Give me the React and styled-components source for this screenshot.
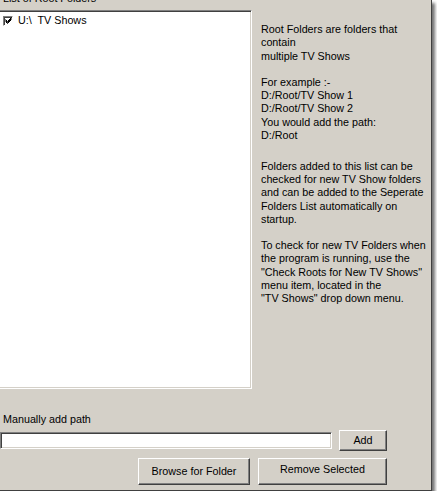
import React from "react";
import styled, { createGlobalStyle } from "styled-components";

const GlobalStyle = createGlobalStyle`
  html, body {
    margin: 0;
    padding: 0;
    background: #ffffff;
  }
  body {
    font-family: "Liberation Sans", Arial, sans-serif;
    font-size: 10.75px;
    color: #000;
  }
`;

const face = "#d4d0c8";

const Window = styled.div`
  width: 432px;
  height: 491px;
  box-sizing: border-box;
  background: ${face};
  border-right: 1px solid #404040;
  border-bottom: 1px solid #404040;
  box-shadow: 3px 3px 3px rgba(0, 0, 0, 0.55);
  overflow: hidden;
  display: flex;
  flex-direction: column;
`;

const Top = styled.div`
  display: flex;
  margin-top: -8px;
`;

const LeftCol = styled.div`
  display: flex;
  flex-direction: column;
  margin-left: -2px;
  width: 254px;
  flex-shrink: 0;
`;

const GroupLabel = styled.div`
  height: 13px;
  line-height: 13px;
  padding-left: 5px;
  margin-bottom: 5px;
  white-space: nowrap;
`;

const ListBox = styled.div`
  height: 379px;
  box-sizing: border-box;
  background: #fff;
  border-style: solid;
  border-width: 1px;
  border-color: #808080 #ffffff #ffffff #808080;
  box-shadow: inset 1px 1px 0 #404040, inset -1px -1px 0 ${face};
  padding: 3px 0 0 4px;
`;

const Item = styled.div`
  display: flex;
  align-items: center;
  gap: 5px;
  height: 13px;
  line-height: 13px;
`;

const CheckBox = styled.span`
  display: inline-flex;
  align-items: center;
  justify-content: center;
  width: 10px;
  height: 10px;
  box-sizing: border-box;
  background: #fff;
  border-style: solid;
  border-width: 1px;
  border-color: #808080 #ffffff #ffffff #808080;
  box-shadow: inset 1px 1px 0 #404040;
`;

const ItemText = styled.span`
  white-space: pre;
`;

const Info = styled.div`
  margin-left: 9px;
  padding-top: 31.2px;
  display: flex;
  flex-direction: column;
  gap: 17.9px;
`;

const InfoBlock = styled.div`
  white-space: pre-line;
  line-height: 13.2px;
`;

const Bottom = styled.div`
  display: flex;
  flex-direction: column;
  width: 387px;
  margin-top: 24.4px;
`;

const FieldLabel = styled.div`
  line-height: 13.3px;
  padding-left: 3px;
  margin-bottom: 3.3px;
`;

const InputRow = styled.div`
  display: flex;
  align-items: center;
  gap: 7px;
  height: 21px;
`;

const PathInput = styled.div`
  width: 332px;
  height: 17px;
  box-sizing: border-box;
  background: #fff;
  border-style: solid;
  border-width: 1px;
  border-color: #808080 #ffffff #ffffff #808080;
  box-shadow: inset 1px 1px 0 #404040, inset -1px -1px 0 ${face};
`;

const ButtonRow = styled.div`
  display: flex;
  justify-content: flex-end;
  gap: 8px;
  margin-top: 7px;
`;

const Button = styled.div`
  width: ${(p) => p.$w}px;
  height: ${(p) => p.$h}px;
  box-sizing: border-box;
  display: flex;
  align-items: center;
  justify-content: center;
  padding-bottom: ${(p) => p.$lift || 0}px;
  background: ${face};
  border-style: solid;
  border-width: 1px;
  border-color: #ffffff #404040 #404040 #ffffff;
  box-shadow: inset -1px -1px 0 #808080;
  white-space: nowrap;
`;

const Check = () => (
  <svg width="7" height="7" viewBox="0 0 7 7">
    <path
      d="M0.5 2.5 L2.5 4.5 L6.5 0.5 M0.5 3.5 L2.5 5.5 L6.5 1.5 M0.5 4.5 L2.5 6.5 L6.5 2.5"
      stroke="#000"
      strokeWidth="1"
      fill="none"
    />
  </svg>
);

export default function App() {
  return (
    <>
      <GlobalStyle />
      <Window>
        <Top>
          <LeftCol>
            <GroupLabel>List of Root Folders</GroupLabel>
            <ListBox>
              <Item>
                <CheckBox>
                  <Check />
                </CheckBox>
                <ItemText>{"U:\\  TV Shows"}</ItemText>
              </Item>
            </ListBox>
          </LeftCol>
          <Info>
            <InfoBlock>
              {"Root Folders are folders that\ncontain\nmultiple TV Shows\n\nFor example :-\nD:/Root/TV Show 1\nD:/Root/TV Show 2\nYou would add the path:\nD:/Root"}
            </InfoBlock>
            <InfoBlock>
              {"Folders added to this list can be\nchecked for new TV Show folders\nand can be added to the Seperate\nFolders List automatically on\nstartup.\n\nTo check for new TV Folders when\nthe program is running, use the\n\"Check Roots for New TV Shows\"\nmenu item, located in the\n\"TV Shows\" drop down menu."}
            </InfoBlock>
          </Info>
        </Top>
        <Bottom>
          <FieldLabel>Manually add path</FieldLabel>
          <InputRow>
            <PathInput />
            <Button $w={48} $h={21}>Add</Button>
          </InputRow>
          <ButtonRow>
            <Button $w={112} $h={27}>Browse for Folder</Button>
            <Button $w={129} $h={27} $lift={5}>Remove Selected</Button>
          </ButtonRow>
        </Bottom>
      </Window>
    </>
  );
}
